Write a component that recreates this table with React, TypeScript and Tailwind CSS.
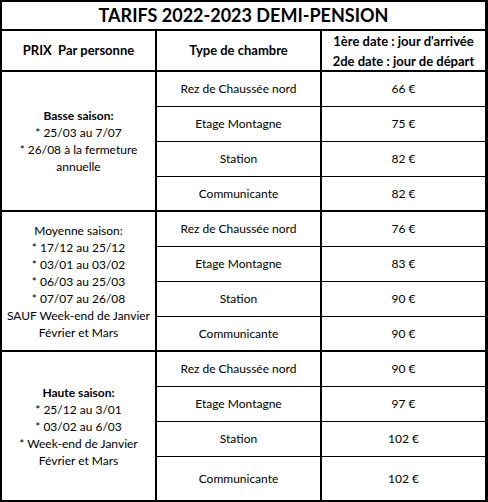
import React from 'react';

type Block = {
  label: React.ReactNode;
  prices: string[];
  tall?: boolean;
};

const rooms = ['Rez de Chaussée nord', 'Etage Montagne', 'Station', 'Communicante'];

const blocks: Block[] = [
  {
    label: (
      <>
        <div className="font-bold">Basse saison:</div>
        <div>* 25/03 au 7/07</div>
        <div>* 26/08 à la fermeture</div>
        <div>annuelle</div>
      </>
    ),
    prices: ['66 €', '75 €', '82 €', '82 €'],
  },
  {
    label: (
      <>
        <div>Moyenne saison:</div>
        <div>* 17/12 au 25/12</div>
        <div>* 03/01 au 03/02</div>
        <div>* 06/03 au 25/03</div>
        <div>* 07/07 au 26/08</div>
        <div>SAUF Week-end de Janvier</div>
        <div>Février et Mars</div>
      </>
    ),
    prices: ['76 €', '83 €', '90 €', '90 €'],
  },
  {
    label: (
      <>
        <div className="font-bold">Haute saison:</div>
        <div>* 25/12 au 3/01</div>
        <div>* 03/02 au 6/03</div>
        <div>* Week-end de Janvier</div>
        <div>Février et Mars</div>
      </>
    ),
    prices: ['90 €', '97 €', '102 €', '102 €'],
    tall: true,
  },
];

const App = () => {
  return (
    <div className="w-[488px] h-[502px] bg-white text-black font-['Lato',sans-serif] text-[12px]">
      <div className="flex flex-col h-full border-t-2 border-l-2 border-r-[3px] border-b-2 border-black">
        {/* Title */}
        <div className="h-[29px] shrink-0 flex items-center justify-center border-b-2 border-black text-[18px] font-bold">
          TARIFS 2022-2023 DEMI-PENSION
        </div>

        {/* Header */}
        <div className="h-[41px] shrink-0 grid grid-cols-[155px_165px_1fr] border-b-2 border-black font-bold text-[13px]">
          <div className="flex items-center justify-center border-r-2 border-black whitespace-pre">
            PRIX  Par personne
          </div>
          <div className="flex items-center justify-center border-r-2 border-black">
            Type de chambre
          </div>
          <div className="flex flex-col items-center justify-center leading-[20px]">
            <div>1ère date : jour d'arrivée</div>
            <div>2de date : jour de départ</div>
          </div>
        </div>

        {/* Seasons */}
        {blocks.map((block, i) => (
          <div
            key={i}
            className={
              'grid grid-cols-[155px_165px_1fr] border-black ' +
              (block.tall ? 'flex-1' : 'h-[140px] shrink-0 border-b-2')
            }
          >
            <div className="flex flex-col items-center justify-center text-center leading-[17px] border-r-2 border-black">
              {block.label}
            </div>
            <div className="flex flex-col border-r-2 border-black">
              {rooms.map((room, j) => (
                <div
                  key={room}
                  className={
                    'flex items-center justify-center border-black ' +
                    (j < 3 ? 'h-[35px] border-b' : 'flex-1')
                  }
                >
                  {room}
                </div>
              ))}
            </div>
            <div className="flex flex-col">
              {block.prices.map((price, j) => (
                <div
                  key={j}
                  className={
                    'flex items-center justify-center border-black ' +
                    (j < 3 ? 'h-[35px] border-b' : 'flex-1')
                  }
                >
                  {price}
                </div>
              ))}
            </div>
          </div>
        ))}
      </div>
    </div>
  );
};

export default App;
